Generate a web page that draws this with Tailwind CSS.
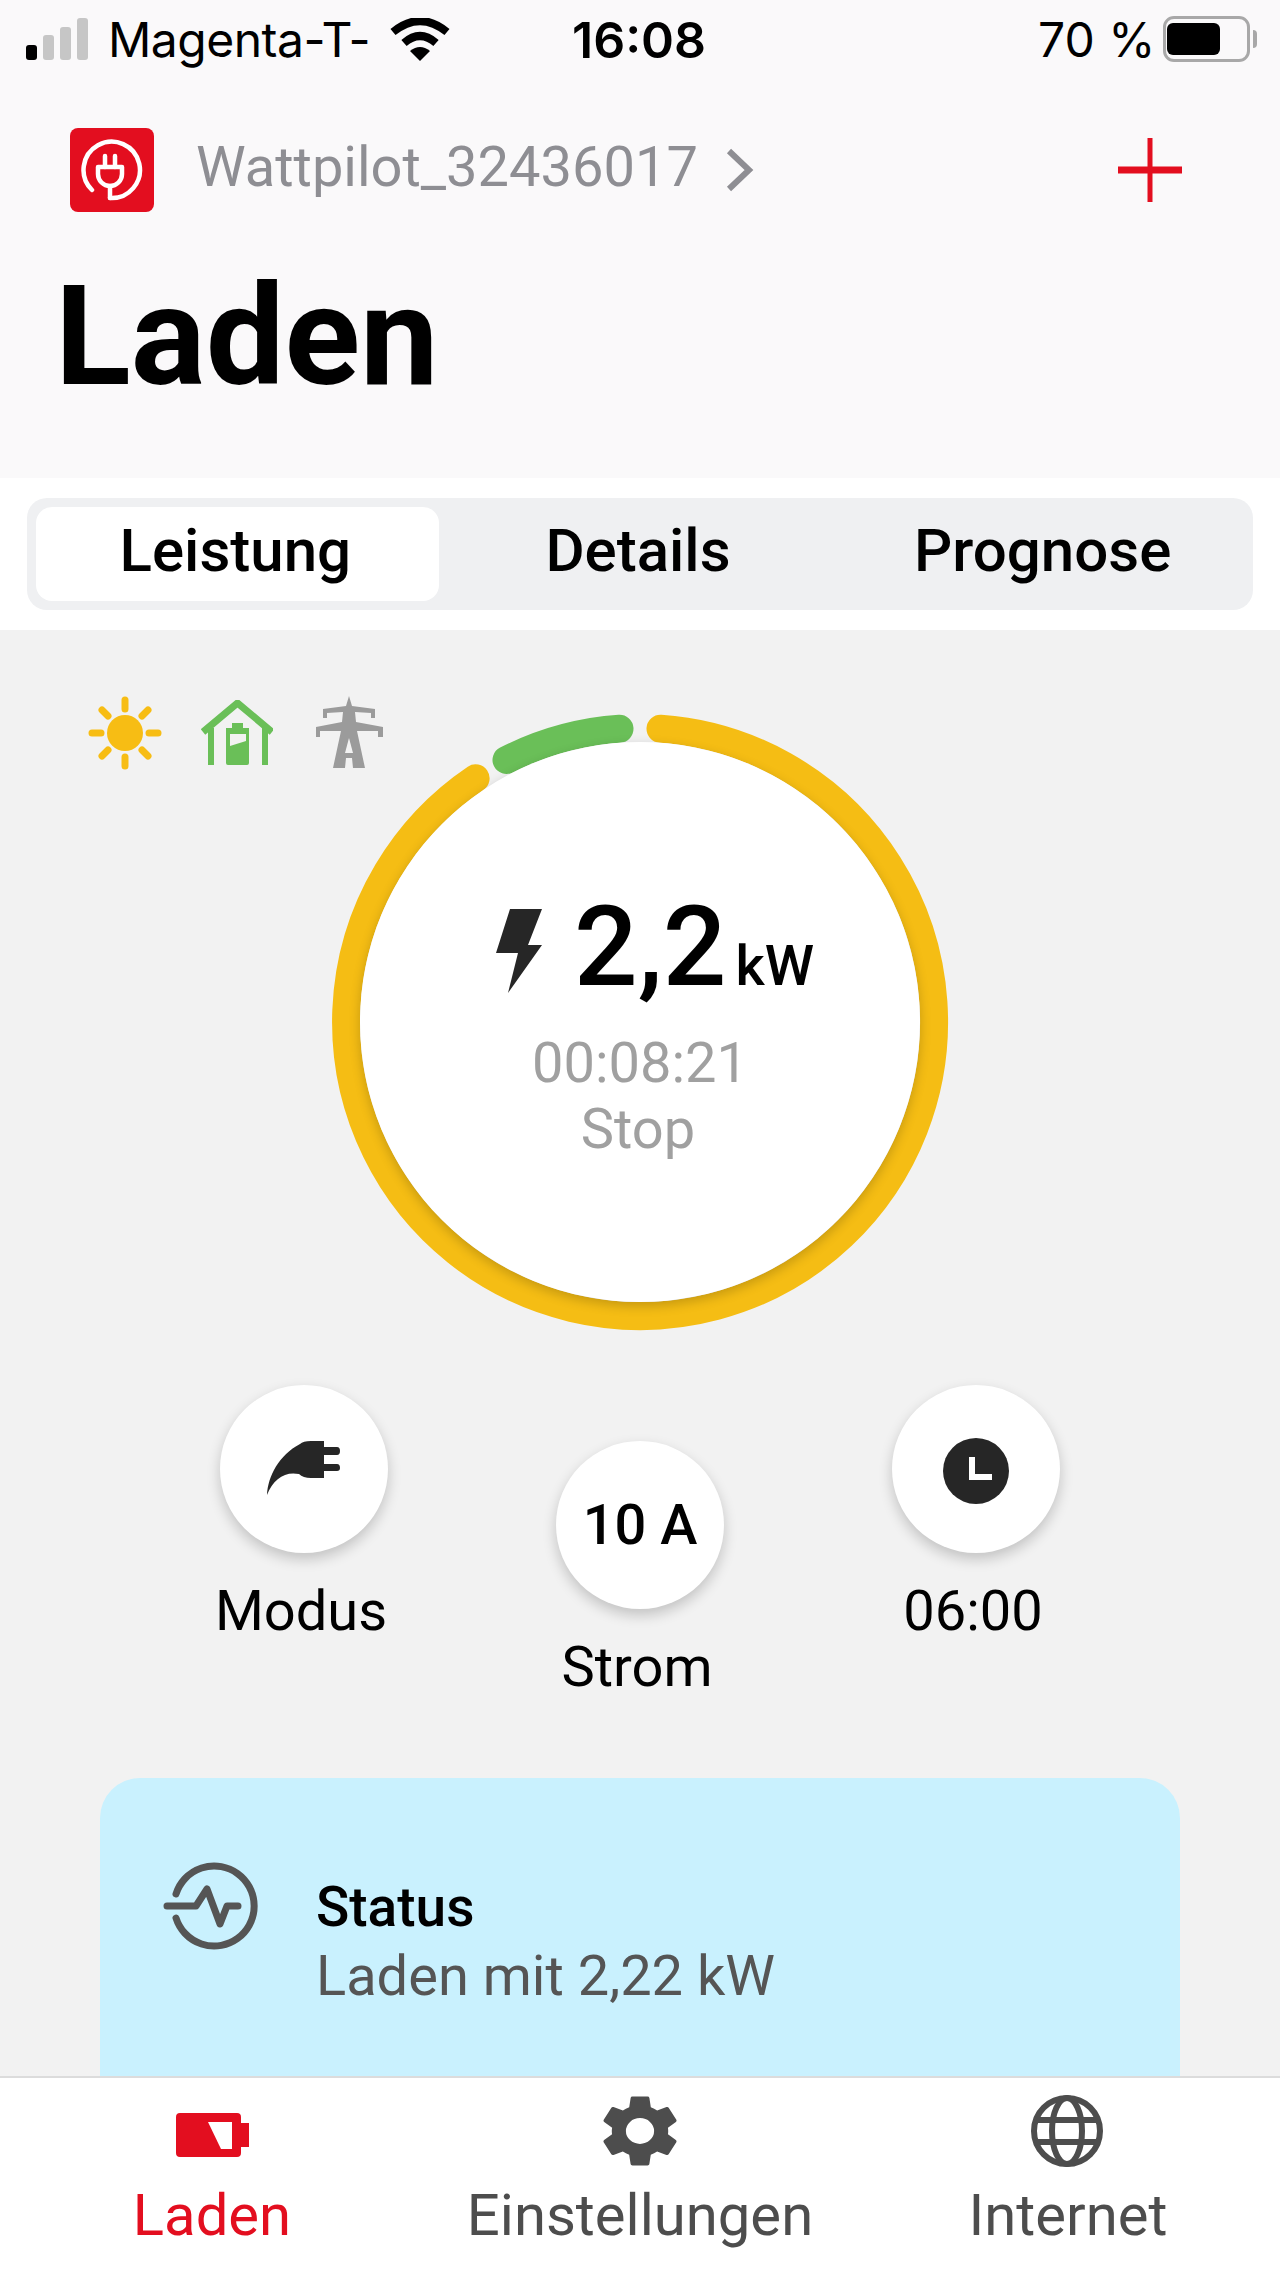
<!DOCTYPE html>
<html lang="de">
<head>
    <meta charset="UTF-8">
    <title>Wattpilot - Laden</title>
    <script src="https://cdn.jsdelivr.net/npm/@tailwindcss/browser@4"></script>
</head>
<body class="font-['Roboto',sans-serif] bg-[#f2f2f2]">
    <div class="flex flex-col w-[1280px] h-[2272px] overflow-hidden">

        <!-- status bar + title -->
        <header class="h-[478px] shrink-0 bg-[#faf9fa]">
            <div class="relative h-[82px] font-['Inter',sans-serif] text-[48px] text-black">
                <div class="absolute left-[26px] top-[18px] flex items-end gap-[6px] h-[42px]">
                    <span class="w-[11px] h-[15px] rounded-[3px] bg-black"></span>
                    <span class="w-[11px] h-[25px] rounded-[3px] bg-[#c6c6c6]"></span>
                    <span class="w-[11px] h-[33px] rounded-[3px] bg-[#c6c6c6]"></span>
                    <span class="w-[11px] h-[42px] rounded-[3px] bg-[#c6c6c6]"></span>
                </div>
                <span class="absolute left-[108px] top-[13px] leading-[54px] tracking-[-0.5px]">Magenta-T-</span>
                <svg class="absolute left-[390px] top-[18px]" width="60" height="44" viewBox="0 0 60 44">
                    <path d="M3 14 Q30 -8 57 14" fill="none" stroke="#000" stroke-width="8"/>
                    <path d="M14 25 Q30 11 46 25" fill="none" stroke="#000" stroke-width="8"/>
                    <path d="M20 33 Q30 25 40 33 L30 43 Z" fill="#000"/>
                </svg>
                <span class="absolute left-[572px] top-[13px] leading-[54px] text-[50px] font-semibold">16:08</span>
                <span class="absolute left-[1038px] top-[13px] leading-[54px]">70 %</span>
                <div class="absolute left-[1163px] top-[16px] w-[87px] h-[46px] rounded-[11px] border-[3px] border-[#a8a8a8] px-[1px] py-[4px]">
                    <div class="w-[53px] h-full rounded-[6px] bg-black"></div>
                </div>
                <span class="absolute left-[1253px] top-[30px] w-[4px] h-[18px] rounded-r bg-[#a8a8a8]"></span>
            </div>

            <div class="flex items-center h-[84px] mt-[46px] pl-[70px] pr-[98px]">
                <div class="w-[84px] h-[84px] rounded-[8px] bg-[#e30e1f] flex items-center justify-center">
                    <svg width="62" height="62" viewBox="0 0 62 62" fill="none" stroke="#fff" stroke-width="4.5">
                        <path d="M11 51 A28.2 28.2 0 1 1 29 59" stroke-linecap="round"/>
                        <path d="M24 17 V28 M34 17 V28" stroke-linecap="round"/>
                        <path d="M17 28 H41 V35 A12 12 0 0 1 17 35 Z" stroke-linejoin="round"/>
                        <path d="M29 47 V59" stroke-linecap="round"/>
                    </svg>
                </div>
                <span class="ml-[42px] text-[56px] leading-[84px] text-[#8e8e93] -translate-y-[3px]">Wattpilot_32436017</span>
                <svg class="ml-[26px]" width="30" height="44" viewBox="0 0 30 44" fill="none" stroke="#8e8e93" stroke-width="6">
                    <path d="M5 3 L25 22 L5 41"/>
                </svg>
                <svg class="ml-auto" width="64" height="64" viewBox="0 0 64 64" fill="none" stroke="#e30e1f">
                    <path d="M32 0 V64" stroke-width="5"/>
                    <path d="M0 32 H64" stroke-width="7"/>
                </svg>
            </div>

            <h1 class="mt-[54px] ml-[55px] text-[140px] leading-[140px] font-bold text-black">Laden</h1>
        </header>

        <!-- segmented control -->
        <div class="h-[152px] shrink-0 bg-white pt-[20px] px-[27px]">
            <div class="grid grid-cols-3 h-[112px] rounded-[20px] bg-[#eff0f2] p-[9px] text-[60px] leading-[90px] font-medium text-black">
                <div class="flex items-center justify-center rounded-[16px] bg-white"><span class="-translate-y-[3px] -translate-x-[2px]">Leistung</span></div>
                <div class="flex items-center justify-center"><span class="-translate-y-[3px] -translate-x-[2px]">Details</span></div>
                <div class="flex items-center justify-center"><span class="-translate-y-[3px]">Prognose</span></div>
            </div>
        </div>

        <!-- power view -->
        <main class="relative flex-1 overflow-hidden">
            <!-- energy sources -->
            <svg class="absolute left-[88px] top-[66px]" width="74" height="74" viewBox="0 0 74 74" fill="#f7bd14" stroke="none">
                <circle cx="37" cy="37" r="18"/>
                <g stroke="#f7bd14" stroke-width="7" stroke-linecap="round">
                    <path d="M37 4 V13 M37 61 V70 M4 37 H13 M61 37 H70 M14 14 L20 20 M54 54 L60 60 M60 14 L54 20 M20 54 L14 60"/>
                </g>
            </svg>
            <svg class="absolute left-[201px] top-[70px]" width="72" height="66" viewBox="0 0 72 66">
                <path d="M2 32 L36.5 3 L71 32" fill="none" stroke="#6abf58" stroke-width="7"/>
                <path d="M10 28 V65 M64 28 V65" fill="none" stroke="#6abf58" stroke-width="6"/>
                <path d="M25 28 H31 V23 H42 V28 H48 V63 Q48 65 46 65 H27 Q25 65 25 63 Z" fill="#6abf58"/>
                <path d="M29 34 H45 V41 L29 46 Z" fill="#f2f2f2"/>
            </svg>
            <svg class="absolute left-[315px] top-[66px]" width="70" height="74" viewBox="0 0 70 74" fill="#9b9b9b">
                <path d="M34 0 L37 10 L60 13 V22 H56 V17 L40 16 L41 26 L68 31 V41 H63 V35 L42 35 L50 72 H38 L37 62 H31 L30 72 H18 L26 35 L5 35 V41 H1 V31 L27 26 L28 16 L12 17 V22 H8 V13 L31 10 Z"/>
                <path d="M34 42 L38 57 H30 Z" fill="#f2f2f2"/>
            </svg>

            <!-- power ring -->
            <div class="relative w-[620px] h-[620px] mt-[82px] mx-auto flex items-center justify-center">
                <svg class="absolute inset-0" width="620" height="620" viewBox="0 0 620 620" fill="none" stroke-width="28" stroke-linecap="round">
                    <path d="M330.5 16.7 A294 294 0 1 1 145.6 66.3" stroke="#f5bd14"/>
                    <path d="M176.5 48 A294 294 0 0 1 289.5 16.7" stroke="#6abf58"/>
                </svg>
                <div class="relative w-[560px] h-[560px] rounded-full bg-white shadow-[0_4px_12px_rgba(0,0,0,0.2)] flex flex-col items-center pt-[157px]">
                    <div class="flex items-baseline h-[96px] translate-x-[15px]">
                        <svg class="self-center mr-[32px] mt-[8px]" width="46" height="84" viewBox="0 0 46 84" fill="#262626">
                            <path d="M14 0 H46 L32 36 H46 L12 84 L22 44 H0 Z"/>
                        </svg>
                        <span class="text-[112px] leading-[96px] font-medium text-black">2,2</span>
                        <span class="ml-[9px] text-[56px] font-medium text-black">kW</span>
                    </div>
                    <div class="mt-[35px] text-[56px] leading-[66px] text-[#a0a0a0]">00:08:21</div>
                    <div class="text-[56px] leading-[66px] text-[#a0a0a0] -translate-x-[2px]">Stop</div>
                </div>
            </div>

            <!-- controls -->
            <div class="flex justify-center mt-[53px] text-[56px] leading-[60px] text-black">
                <div class="w-[336px] flex flex-col items-center">
                    <div class="w-[168px] h-[168px] rounded-full bg-white shadow-[0_6px_14px_rgba(0,0,0,0.2)] flex items-center justify-center">
                        <svg class="-translate-y-[1px]" width="74" height="54" viewBox="0 0 74 54" fill="#262626">
                            <path d="M0 54 C1 35 12 14 33 3 Q36 0 44 0 H57 V6 H70 Q73 6 73 10 Q73 14 70 14 H57 V23 H70 Q73 23 73 27 Q73 30 70 30 H57 V37 H44 Q36 37 32 33 C18 30 6 38 0 54 Z"/>
                        </svg>
                    </div>
                    <span class="mt-[28px] -translate-x-[3px]">Modus</span>
                </div>
                <div class="w-[336px] flex flex-col items-center mt-[56px]">
                    <div class="w-[168px] h-[168px] rounded-full bg-white shadow-[0_6px_14px_rgba(0,0,0,0.2)] flex items-center justify-center font-medium">10 A</div>
                    <span class="mt-[28px] -translate-x-[3px]">Strom</span>
                </div>
                <div class="w-[336px] flex flex-col items-center">
                    <div class="w-[168px] h-[168px] rounded-full bg-white shadow-[0_6px_14px_rgba(0,0,0,0.2)] flex items-center justify-center">
                        <svg class="translate-y-[2px]" width="66" height="66" viewBox="0 0 66 66">
                            <circle cx="33" cy="33" r="33" fill="#262626"/>
                            <path d="M29 19 V39 H49" fill="none" stroke="#fff" stroke-width="6"/>
                        </svg>
                    </div>
                    <span class="mt-[28px] -translate-x-[3px]">06:00</span>
                </div>
            </div>

            <!-- status card -->
            <div class="flex mx-[100px] mt-[81px] h-[400px] rounded-[40px] bg-[#c9f1fe] pl-[60px] pt-[84px]">
                <svg width="100" height="88" viewBox="0 0 100 88" fill="none" stroke="#555" stroke-width="7" stroke-linecap="round" stroke-linejoin="round">
                    <path d="M16 32 A40 40 0 1 1 16 56"/>
                    <path d="M7 44 H36 L47 27 L60 62 L67 44 H78"/>
                </svg>
                <div class="ml-[56px]">
                    <div class="text-[55px] leading-[68px] font-medium text-black mt-[11px]">Status</div>
                    <div class="text-[56px] leading-[70px] text-[#555]">Laden mit 2,22 kW</div>
                </div>
            </div>
        </main>

        <!-- tab bar -->
        <nav class="relative h-[196px] shrink-0 bg-white border-t-2 border-[#dcdcdc] text-[58px] leading-[60px] text-[#4d4d4d]">
            <div class="flex h-full">
                <div class="w-[424px] flex flex-col items-center text-[#e30e1f]">
                    <svg class="mt-[35px] mb-[28px]" width="73" height="44" viewBox="0 0 73 44" fill="#e30e1f">
                        <path d="M4 0 H61 Q65 0 65 4 V10 H73 V34 H65 V40 Q65 44 61 44 H4 Q0 44 0 40 V4 Q0 0 4 0 Z"/>
                        <path d="M32 9 H56 V36 H45 Z" fill="#fff"/>
                    </svg>
                    <span>Laden</span>
                </div>
                <div class="w-[432px] flex flex-col items-center">
                    <svg class="mt-[10px] mb-[11px]" width="94" height="86" viewBox="0 0 24 24" preserveAspectRatio="none" fill="#4d4d4d">
                        <path d="M19.14 12.94c.04-.3.06-.61.06-.94s-.02-.64-.07-.94l2.03-1.58a.49.49 0 0 0 .12-.61l-1.92-3.32a.49.49 0 0 0-.59-.22l-2.39.96c-.5-.38-1.03-.7-1.62-.94l-.36-2.54a.48.48 0 0 0-.48-.41h-3.84a.47.47 0 0 0-.47.41l-.36 2.54c-.59.24-1.13.57-1.62.94l-2.39-.96a.48.48 0 0 0-.59.22L2.74 8.87a.47.47 0 0 0 .12.61l2.03 1.58c-.05.3-.09.63-.09.94s.02.64.07.94l-2.03 1.58a.49.49 0 0 0-.12.61l1.92 3.32c.12.22.37.29.59.22l2.39-.96c.5.38 1.03.7 1.62.94l.36 2.54c.05.24.24.41.48.41h3.84c.24 0 .44-.17.47-.41l.36-2.54c.59-.24 1.13-.56 1.62-.94l2.39.96c.22.08.47 0 .59-.22l1.92-3.32a.47.47 0 0 0-.12-.61l-2.01-1.58zM12 15.6a3.6 3.6 0 1 1 0-7.2 3.6 3.6 0 0 1 0 7.2z"/>
                    </svg>
                    <span>Einstellungen</span>
                </div>
                <div class="w-[424px] flex flex-col items-center">
                    <svg class="mt-[17px] mb-[18px] -translate-x-[1px]" width="72" height="72" viewBox="0 0 72 72" fill="none" stroke="#4d4d4d" stroke-width="6">
                        <circle cx="36" cy="36" r="33"/>
                        <ellipse cx="36" cy="36" rx="15" ry="33"/>
                        <path d="M7 25 H65 M7 47 H65"/>
                    </svg>
                    <span>Internet</span>
                </div>
            </div>
        </nav>
    </div>
</body>
</html>
